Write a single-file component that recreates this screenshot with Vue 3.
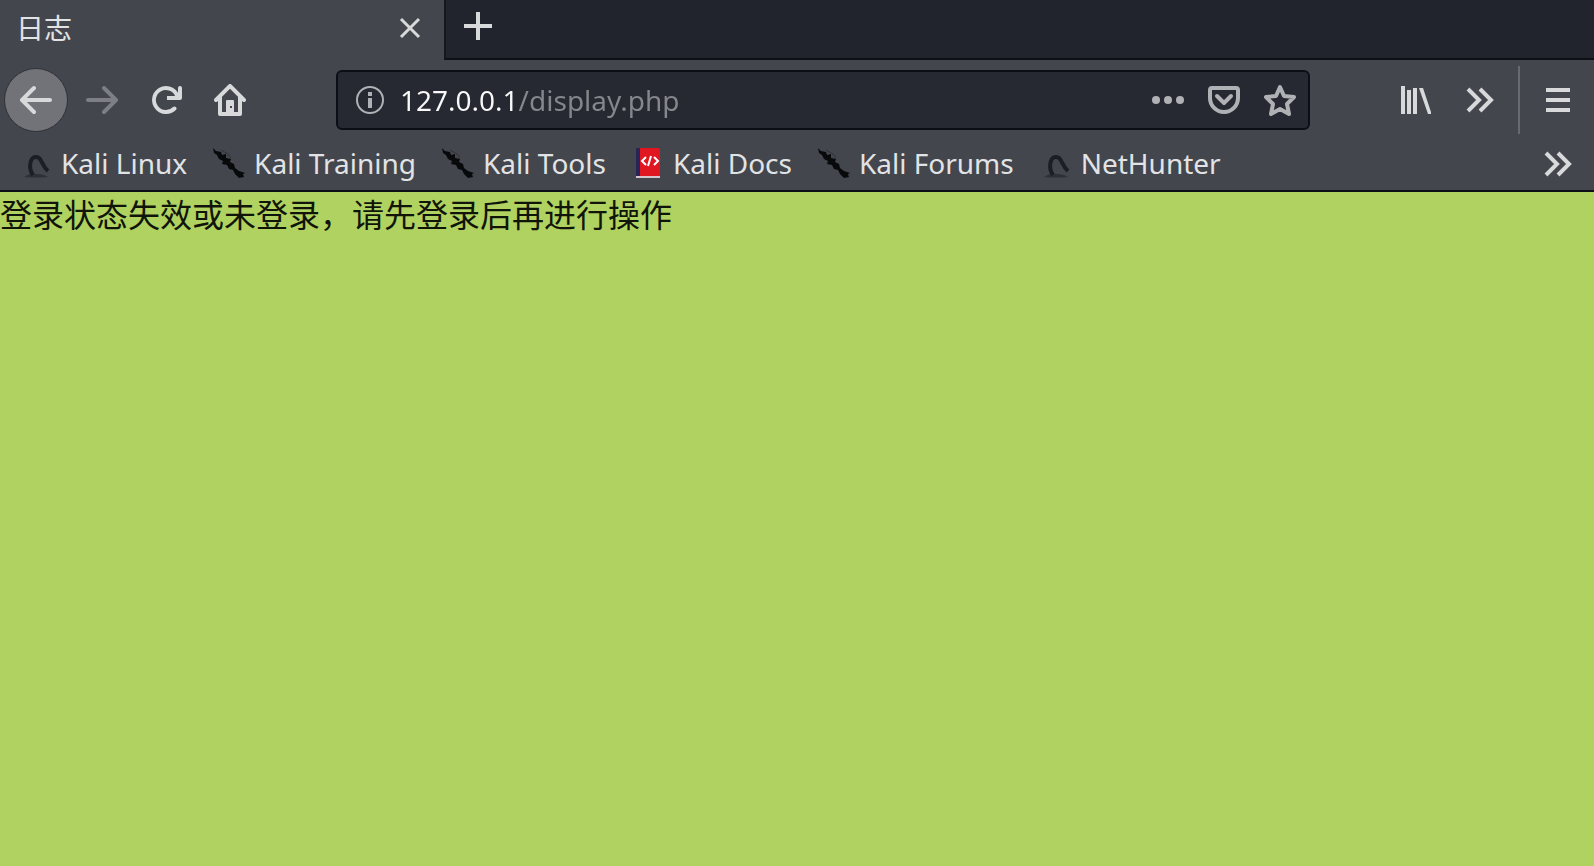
<template>
  <div class="browser">
    <!-- Tab strip -->
    <div class="tab-strip">
      <div class="tab">
        <span class="tab-title">日志</span>
        <button class="tab-close" aria-label="Close tab">
          <svg width="32" height="32" viewBox="0 0 32 32">
            <path d="M7 7l18 18M25 7L7 25" fill="none" stroke="currentColor" stroke-width="3" />
          </svg>
        </button>
      </div>
      <div class="tab-rest">
        <button class="new-tab" aria-label="New tab">
          <svg width="32" height="32" viewBox="0 0 32 32">
            <path d="M16 2v28M2 16h28" fill="none" stroke="currentColor" stroke-width="4" />
          </svg>
        </button>
      </div>
    </div>

    <!-- Navigation bar -->
    <div class="nav-bar">
      <button
        v-for="b in navButtons"
        :key="b.name"
        class="tool"
        :class="b.name"
        :aria-label="b.name"
        :disabled="b.name === 'forward'"
      >
        <svg width="32" height="32" viewBox="0 0 16 16">
          <path :d="b.path" fill="currentColor" fill-rule="evenodd" />
        </svg>
      </button>

      <div class="url-bar">
        <button class="url-icon info" aria-label="Site information">
          <svg width="32" height="32" viewBox="0 0 32 32">
            <circle cx="16" cy="16" r="13" fill="none" stroke="currentColor" stroke-width="2" />
            <path d="M14 8h4v4h-4zM14 14h4v10h-4z" fill="currentColor" />
          </svg>
        </button>
        <input v-model="url" class="url-input" type="text" aria-label="Address" spellcheck="false" />
        <button class="url-icon" aria-label="Page actions">
          <svg width="32" height="32" viewBox="0 0 32 32" fill="currentColor">
            <circle cx="4" cy="16" r="4" />
            <circle cx="16" cy="16" r="4" />
            <circle cx="28" cy="16" r="4" />
          </svg>
        </button>
        <button class="url-icon" aria-label="Save to Pocket">
          <svg width="32" height="32" viewBox="0 0 32 32" fill="none" stroke="currentColor" stroke-width="4">
            <path d="M4 4h24a2 2 0 0 1 2 2v8a14 14 0 0 1-28 0V6a2 2 0 0 1 2-2z" />
            <path d="M9 12l7 7 7-7" stroke-linecap="round" stroke-linejoin="round" />
          </svg>
        </button>
        <button class="url-icon" aria-label="Bookmark this page">
          <svg width="32" height="32" viewBox="0 0 32 32">
            <path
              d="M16 3l4 9 10 1-7 7 2 10-9-5-9 5 2-10-7-7 10-1z"
              fill="none"
              stroke="currentColor"
              stroke-width="4"
              stroke-linejoin="round"
            />
          </svg>
        </button>
      </div>

      <button class="tool" aria-label="Library">
        <svg width="32" height="32" viewBox="0 0 32 32" fill="currentColor">
          <path d="M1 2h4v28H1zM7 6h4v24H7zM13 4h4v26h-4zM19 4h4l8 24v2h-3z" />
        </svg>
      </button>
      <button class="tool" aria-label="More tools">
        <svg width="32" height="32" viewBox="0 0 32 32">
          <path :d="chevrons" fill="none" stroke="currentColor" stroke-width="4" />
        </svg>
      </button>
      <div class="separator"></div>
      <button class="tool" aria-label="Menu">
        <svg width="32" height="32" viewBox="0 0 32 32">
          <path d="M4 6h24M4 16h24M4 26h24" fill="none" stroke="currentColor" stroke-width="4" />
        </svg>
      </button>
    </div>

    <!-- Bookmarks -->
    <div class="bookmarks">
      <a v-for="mark in bookmarks" :key="mark.label" href="#" class="bookmark">
        <svg v-if="mark.icon === 'dragon'" width="32" height="32" viewBox="0 0 32 32">
          <path d="M4 30q6-4 12-3 8 0 12 3-12 1-24 0z" fill="#2d3035" />
          <path
            d="M13 28C8 21 10 11 15 10c7-1 6 8 13 14"
            fill="none"
            stroke="#1b1e23"
            stroke-width="4"
          />
        </svg>
        <svg v-else-if="mark.icon === 'knife'" width="32" height="32" viewBox="0 0 32 32">
          <path
            d="M0 1l3 3 5 1 1 3 4-1v4l5 1-1 3 4 2 1 4 4 3 6 2-2 1 1 3-5 1-4-4-2-4-4-1-2-4-5-1 1-3-4-2-2-4-3-2z"
            fill="#08090b"
          />
          <path d="M8 3l7 4 3 4" fill="none" stroke="#303238" stroke-width="1" />
        </svg>
        <svg v-else width="32" height="32" viewBox="0 0 32 32">
          <path d="M4 1h5v28H4z" fill="#2b2457" />
          <path d="M8 1h18a2 2 0 0 1 2 2v26H8z" fill="#e01720" />
          <path d="M4 29h24v2H4z" fill="#d5c6cb" />
          <path
            d="M14 10l-4 4 4 4M22 10l4 4-4 4M19 9l-3 10"
            fill="none"
            stroke="#fff"
            stroke-width="2"
          />
        </svg>
        <span>{{ mark.label }}</span>
      </a>
      <button class="tool more" aria-label="More bookmarks">
        <svg width="32" height="32" viewBox="0 0 32 32">
          <path :d="chevrons" fill="none" stroke="currentColor" stroke-width="4" />
        </svg>
      </button>
    </div>

    <!-- Page content -->
    <main class="page">登录状态失效或未登录，请先登录后再进行操作</main>
  </div>
</template>

<script setup>
import { ref } from 'vue'

const url = ref('127.0.0.1/display.php')

const chevrons = 'M4 5l11 11L4 27M16 5l11 11-11 11'

const navButtons = [
  {
    name: 'back',
    path: 'M15 7H3.414l4.293-4.293a1 1 0 0 0-1.414-1.414l-6 6a1 1 0 0 0 0 1.414l6 6a1 1 0 0 0 1.414-1.414L3.414 9H15a1 1 0 0 0 0-2z'
  },
  {
    name: 'forward',
    path: 'M1 7h11.586L8.293 2.707a1 1 0 0 1 1.414-1.414l6 6a1 1 0 0 1 0 1.414l-6 6a1 1 0 0 1-1.414-1.414L12.586 9H1a1 1 0 0 1 0-2z'
  },
  {
    name: 'reload',
    path: 'M15 1a1 1 0 0 0-1 1v2.418A6.995 6.995 0 1 0 8 15a6.954 6.954 0 0 0 4.950-2.050 1 1 0 0 0-1.414-1.414A5.019 5.019 0 1 1 12.549 6H8.500v2H15a1 1 0 0 0 1-1V2a1 1 0 0 0-1-1z'
  },
  {
    name: 'home',
    path: 'M8.707.293a1 1 0 0 0-1.414 0l-7 7a1 1 0 0 0 1.414 1.414L2 8.414V15a1 1 0 0 0 1 1h10a1 1 0 0 0 1-1V8.414l.293.293a1 1 0 0 0 1.414-1.414zM12 14h-2V8.500a.5.5 0 0 0-.5-.5h-3a.5.5 0 0 0-.5.5V14H4V6.414l4-4 4 4zM8 11h1v1H8z'
  }
]

const bookmarks = [
  { label: 'Kali Linux', icon: 'dragon' },
  { label: 'Kali Training', icon: 'knife' },
  { label: 'Kali Tools', icon: 'knife' },
  { label: 'Kali Docs', icon: 'book' },
  { label: 'Kali Forums', icon: 'knife' },
  { label: 'NetHunter', icon: 'dragon' }
]
</script>

<style>
body {
  margin: 0;
  background: #afd261;
}
</style>

<style scoped>
.browser {
  display: flex;
  flex-direction: column;
  min-height: 100vh;
  font-family: "Noto Sans", "Noto Sans CJK SC", sans-serif;
  font-size: 28px;
  color: #e2e3e5;
}

svg {
  display: block;
  flex: none;
}

button {
  display: flex;
  align-items: center;
  justify-content: center;
  flex: none;
  padding: 0;
  border: none;
  background: none;
  color: #d8d9db;
}

.tab-strip {
  display: flex;
  height: 60px;
  background: #21242d;
}

.tab {
  display: flex;
  align-items: center;
  justify-content: space-between;
  box-sizing: border-box;
  width: 444px;
  padding: 0 18px 4px 16px;
  background: #43464d;
}

.tab-title {
  line-height: 40px;
}

.tab-rest {
  display: flex;
  flex: 1;
  border-left: 2px solid #15171f;
  border-bottom: 2px solid #0e1017;
}

.new-tab {
  width: 64px;
  height: 52px;
}

.nav-bar {
  display: flex;
  align-items: center;
  height: 80px;
  padding: 0 4px;
  background: #43464d;
}

.tool {
  width: 64px;
  height: 64px;
}

.back {
  margin-right: 2px;
  border: 1px solid #303238;
  border-radius: 50%;
  background: #727378;
}

.forward {
  color: #7d7f84;
}

.url-bar {
  display: flex;
  align-items: center;
  flex: 1;
  box-sizing: border-box;
  height: 60px;
  margin: 0 74px;
  padding: 0 12px 0 16px;
  border: 2px solid #0d0e15;
  border-radius: 6px;
  background: #272932;
}

.url-icon {
  width: 32px;
  height: 56px;
  margin-left: 24px;
  color: #b0b1b5;
}

.info {
  margin: 0 14px 0 0;
}

.url-input {
  flex: 1;
  min-width: 0;
  height: 44px;
  padding: 0;
  border: none;
  outline: none;
  /* host is white, path is dimmed */
  background: linear-gradient(90deg, #f9f9fa 118px, #85878c 118px);
  background-clip: text;
  -webkit-text-fill-color: transparent;
  font: inherit;
}

.separator {
  width: 2px;
  height: 68px;
  margin: 0 6px;
  background: #676a70;
}

.bookmarks {
  display: flex;
  align-items: center;
  height: 50px;
  padding: 0 4px 0 20px;
  border-bottom: 2px solid #0e1017;
  background: #43464d;
}

.bookmark {
  display: flex;
  align-items: center;
  gap: 9px;
  margin-right: 26px;
  padding-bottom: 4px;
  color: inherit;
  line-height: 40px;
  text-decoration: none;
  white-space: nowrap;
}

.more {
  height: 48px;
  margin-left: auto;
  padding-bottom: 2px;
}

.page {
  flex: 1;
  background: #afd261;
  color: #111408;
  font-family: "Noto Sans CJK SC", sans-serif;
  font-size: 32px;
  line-height: 42px;
}
</style>
